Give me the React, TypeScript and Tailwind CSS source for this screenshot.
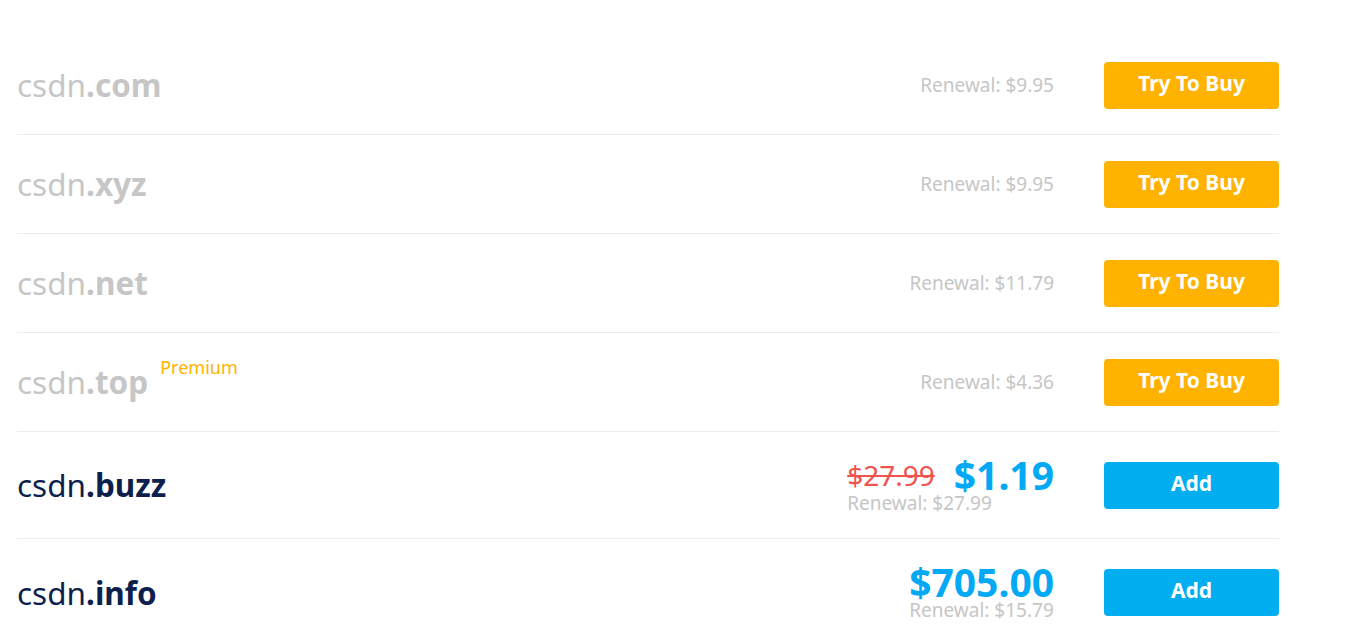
import React from "react";

type Row = {
  name: string;
  tld: string;
  available: boolean;
  premium?: boolean;
  renewal: string;
  oldPrice?: string;
  price?: string;
};

const rows: Row[] = [
  { name: "csdn", tld: ".com", available: false, renewal: "Renewal: $9.95" },
  { name: "csdn", tld: ".xyz", available: false, renewal: "Renewal: $9.95" },
  { name: "csdn", tld: ".net", available: false, renewal: "Renewal: $11.79" },
  { name: "csdn", tld: ".top", available: false, premium: true, renewal: "Renewal: $4.36" },
  { name: "csdn", tld: ".buzz", available: true, oldPrice: "$27.99", price: "$1.19", renewal: "Renewal: $27.99" },
  { name: "csdn", tld: ".info", available: true, price: "$705.00", renewal: "Renewal: $15.79" },
];

export default function App() {
  return (
    <div
      className="min-h-[627px] bg-white pl-[17px] pt-[36px]"
      style={{ fontFamily: '"Noto Sans", "Liberation Sans", sans-serif' }}
    >
      <div className="w-[1262px]">
        {rows.map((r, i) => (
          <div
            key={i}
            className={`flex items-center ${i < rows.length - 1 ? "border-b border-[#ececec]" : ""} ${
              r.available ? "h-[107px]" : "h-[99px]"
            }`}
          >
            <div className="flex-1 flex items-start">
              <span
                className={`text-[31.5px] leading-none ${r.available ? "text-[#0d1f4c]" : "text-[#c6c6c6]"}`}
              >
                {r.name}
                <span className="font-bold">{r.tld}</span>
              </span>
              {r.premium && (
                <span className="ml-[12px] -mt-[8px] text-[18px] leading-none text-[#ffb300]">Premium</span>
              )}
            </div>
            <div className="flex flex-col items-start">
              {r.price ? (
                <div className="flex flex-col items-start pb-[1px]">
                  <div className="flex items-center gap-[19px]">
                    {r.oldPrice && (
                      <span className="text-[28px] leading-[34px] text-[#ef5350] line-through decoration-[2px]">
                        {r.oldPrice}
                      </span>
                    )}
                    <span className="text-[39px] leading-[34px] font-bold text-[#03a9f4]">{r.price}</span>
                  </div>
                  <span className="mt-[2px] text-[19px] leading-[18px] text-[#c6c6c6]">{r.renewal}</span>
                </div>
              ) : (
                <span className="text-[19px] leading-none text-[#c6c6c6]">{r.renewal}</span>
              )}
            </div>
            <button
              className={`ml-[50px] w-[175px] h-[47px] rounded-[4px] text-white font-bold pb-[3px] text-[21px] ${
                r.available ? "bg-[#03aef0]" : "bg-[#ffb300]"
              }`}
            >
              {r.available ? "Add" : "Try To Buy"}
            </button>
          </div>
        ))}
      </div>
    </div>
  );
}
